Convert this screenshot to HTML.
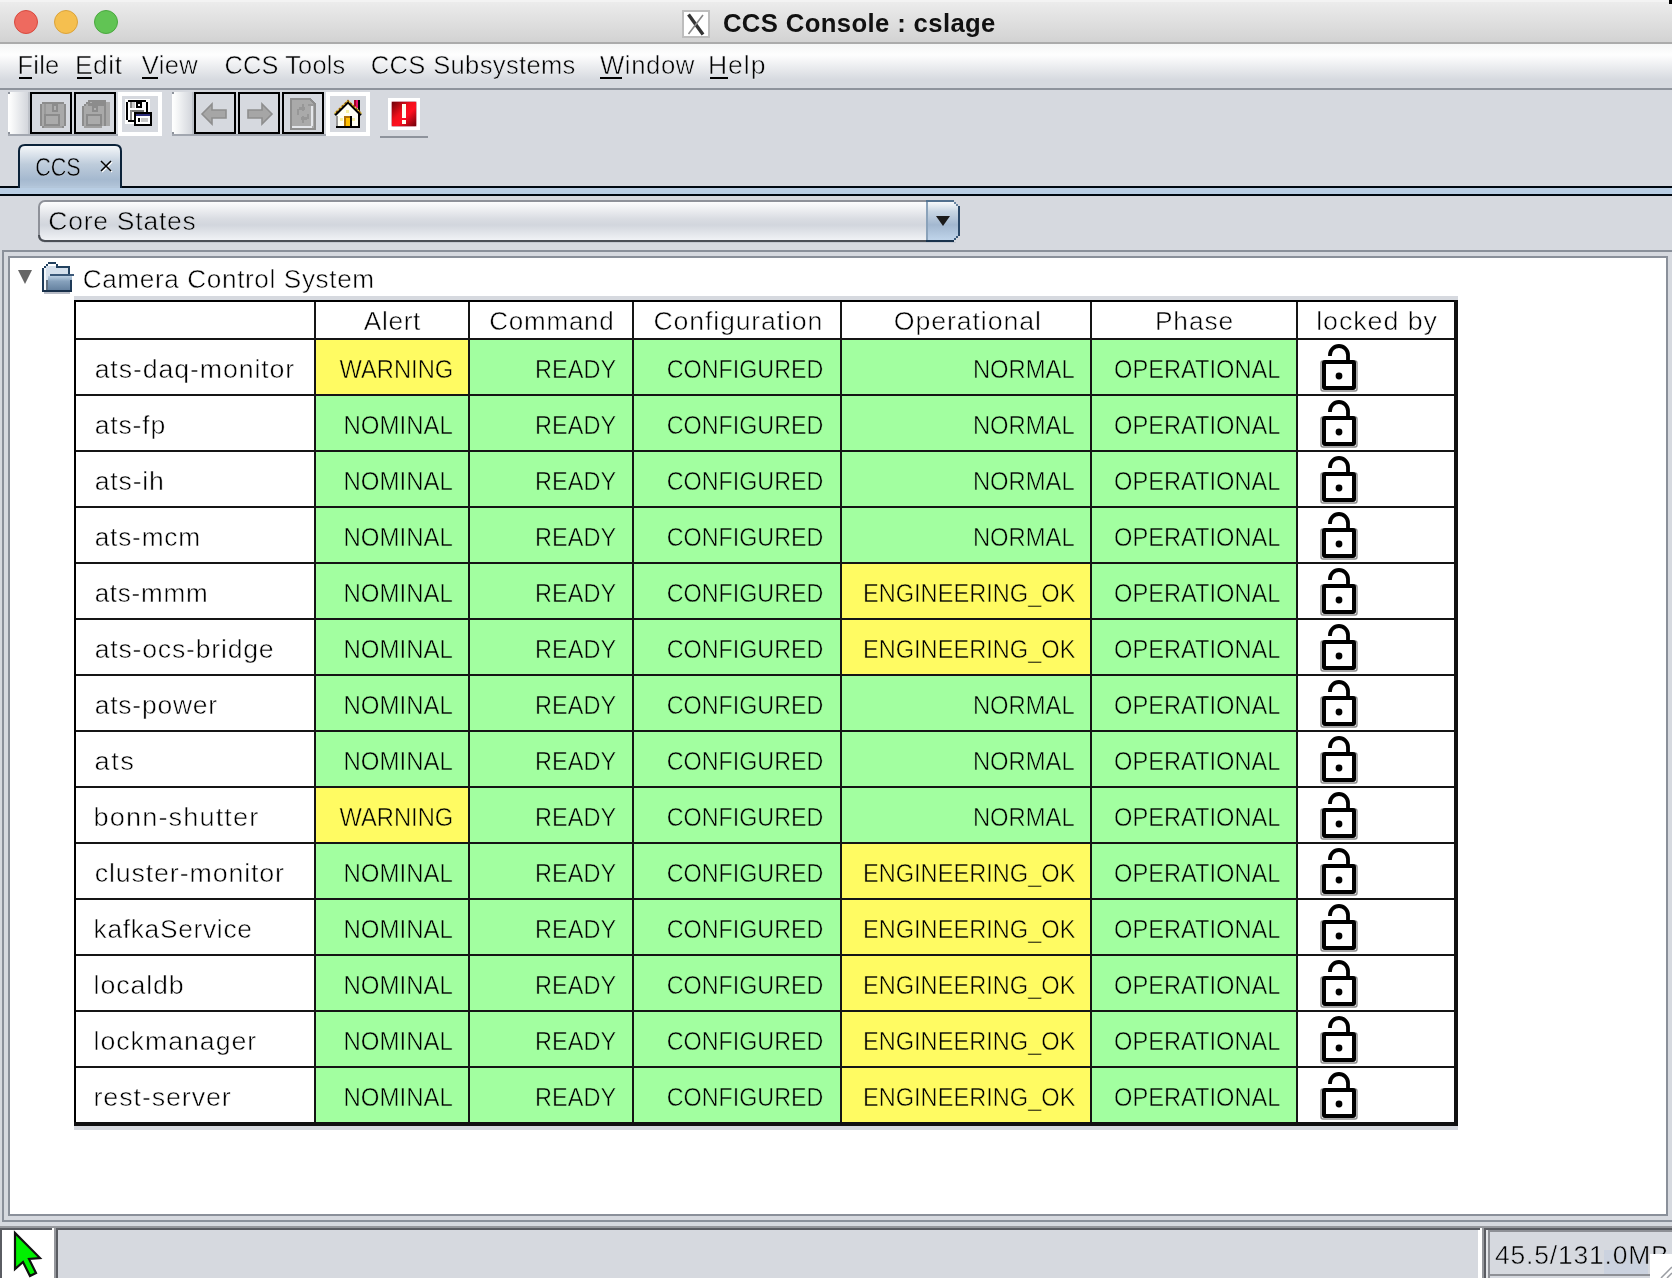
<!DOCTYPE html>
<html><head><meta charset="utf-8"><title>CCS Console</title>
<style>html,body{margin:0;padding:0;width:1672px;height:1278px;overflow:hidden;background:#D6D9DF}
svg{display:block;will-change:transform} text{font-family:"Liberation Sans",sans-serif;white-space:pre}</style></head>
<body><svg width="1672" height="1278" viewBox="0 0 1672 1278" shape-rendering="crispEdges">
<defs>
  <linearGradient id="gTitle" x1="0" y1="0" x2="0" y2="1"><stop offset="0" stop-color="#EDEDED"/><stop offset="1" stop-color="#D2D2D2"/></linearGradient>
  <linearGradient id="gMenu" x1="0" y1="0" x2="0" y2="1"><stop offset="0" stop-color="#F5F6F6"/><stop offset="0.25" stop-color="#FEFEFE"/><stop offset="0.82" stop-color="#D6D9DF"/><stop offset="1" stop-color="#D6D9DF"/></linearGradient>
  <linearGradient id="gGrip" x1="0" y1="0" x2="1" y2="0"><stop offset="0" stop-color="#FFFFFF"/><stop offset="0.15" stop-color="#FAFBFB"/><stop offset="1" stop-color="#D3D6DC"/></linearGradient>
  <linearGradient id="gTab" x1="0" y1="0" x2="0" y2="1"><stop offset="0" stop-color="#F7F9FB"/><stop offset="0.45" stop-color="#BECCDB"/><stop offset="0.8" stop-color="#A5B9CF"/><stop offset="1" stop-color="#B3C6DA"/></linearGradient>
  <linearGradient id="gCombo" x1="0" y1="0" x2="0" y2="1"><stop offset="0" stop-color="#FFFFFF"/><stop offset="0.45" stop-color="#D9DCE2"/><stop offset="0.6" stop-color="#D2D6DD"/><stop offset="1" stop-color="#F2F4F7"/></linearGradient>
  <linearGradient id="gArrow" x1="0" y1="0" x2="0" y2="1"><stop offset="0" stop-color="#F6F9FB"/><stop offset="0.25" stop-color="#C8D6E3"/><stop offset="0.6" stop-color="#A3B8D0"/><stop offset="1" stop-color="#BFD4EA"/></linearGradient>
  <linearGradient id="gFolder" x1="0" y1="0" x2="0" y2="1"><stop offset="0" stop-color="#BCD0E3"/><stop offset="0.35" stop-color="#86A1BC"/><stop offset="1" stop-color="#627F9D"/></linearGradient>
  <linearGradient id="gRed" x1="0" y1="0" x2="1" y2="1"><stop offset="0" stop-color="#6E0008"/><stop offset="0.4" stop-color="#F0101A"/><stop offset="0.6" stop-color="#FF1020"/><stop offset="1" stop-color="#70000A"/></linearGradient>
</defs>
<!-- title bar -->
<rect x="0" y="0" width="1672" height="43" fill="url(#gTitle)"/>
<rect x="0" y="42" width="1672" height="2" fill="#ABABAB"/>
<rect x="0" y="0" width="1672" height="2" fill="#F3F3F3"/>
<rect x="1669" y="0" width="3" height="4" fill="#000"/>
<g shape-rendering="auto">
<circle cx="26" cy="22" r="11.5" fill="#EE6A5F" stroke="#D8493E" stroke-width="1"/>
<circle cx="66" cy="22" r="11.5" fill="#F5BF4F" stroke="#DBA33A" stroke-width="1"/>
<circle cx="106" cy="22" r="11.5" fill="#61C454" stroke="#4AA83F" stroke-width="1"/>
</g>
<!-- X11 icon -->
<rect x="682" y="10" width="28" height="28" fill="#BDBDBD"/>
<rect x="684" y="12" width="24" height="24" fill="#FFFFFF"/>
<g shape-rendering="auto">
<path d="M688.5 14.5 L703 34.5" stroke="#333" stroke-width="3.4"/>
<path d="M703 15 L688.5 34" stroke="#888" stroke-width="1.6"/>
</g>
<!-- menu bar -->
<rect x="0" y="44" width="1672" height="44" fill="url(#gMenu)"/>
<rect x="0" y="88" width="1672" height="2" fill="#8E939C"/>
<g fill="#000">
<rect x="19" y="77" width="13" height="2"/>
<rect x="77" y="77" width="15" height="2"/>
<rect x="142" y="77" width="16" height="2"/>
<rect x="600" y="77" width="22" height="2"/>
<rect x="710" y="77" width="18" height="2"/>
</g>
<!-- toolbar 1 -->
<rect x="8" y="92" width="20" height="42" fill="url(#gGrip)"/>
<rect x="28" y="92" width="2" height="42" fill="#BEC2C9"/>
<rect x="8" y="92" width="2" height="2" fill="#8E939C"/>
<rect x="8" y="132" width="2" height="2" fill="#8E939C"/>
<rect x="8" y="134" width="112" height="2" fill="#A2A7B0"/>
<rect x="31" y="93" width="40" height="40" fill="none" stroke="#000" stroke-width="2"/>
<rect x="75" y="93" width="40" height="40" fill="none" stroke="#000" stroke-width="2"/>
<rect x="118" y="92" width="44" height="44" fill="#FFFFFF"/>
<rect x="122" y="96" width="36" height="36" fill="#D6D9DF"/>
<!-- floppy disabled 1 -->
<g>
<rect x="42" y="102" width="22" height="26" fill="#8C8C8C"/>
<rect x="40" y="104" width="26" height="22" fill="#8C8C8C"/>
<rect x="42" y="104" width="22" height="22" fill="#A9A9A9"/>
<rect x="44" y="104" width="2" height="10" fill="#999"/>
<rect x="52" y="104" width="6" height="8" fill="#8C8C8C"/>
<rect x="54" y="106" width="2" height="4" fill="#B0B0B0"/>
<rect x="44" y="114" width="16" height="12" fill="#8C8C8C"/>
<rect x="46" y="116" width="12" height="8" fill="#ABABAB"/>
<rect x="44" y="126" width="18" height="2" fill="#A0A0A0"/>
</g>
<!-- floppy disabled 2 -->
<g>
<rect x="88" y="100" width="18" height="2" fill="#8C8C8C"/>
<rect x="86" y="102" width="22" height="2" fill="#8C8C8C"/>
<rect x="106" y="102" width="4" height="24" fill="#A8A8A8"/>
<rect x="104" y="102" width="2" height="24" fill="#8C8C8C"/>
<rect x="84" y="104" width="22" height="22" fill="#8C8C8C"/>
<rect x="82" y="106" width="24" height="20" fill="#8C8C8C"/>
<rect x="84" y="106" width="20" height="20" fill="#A9A9A9"/>
<rect x="86" y="104" width="2" height="2" fill="#A9A9A9"/>
<rect x="90" y="102" width="2" height="1" fill="#B0B0B0"/>
<rect x="92" y="106" width="6" height="6" fill="#8C8C8C"/>
<rect x="94" y="108" width="2" height="2" fill="#B0B0B0"/>
<rect x="86" y="114" width="16" height="12" fill="#8C8C8C"/>
<rect x="88" y="116" width="12" height="8" fill="#ABABAB"/>
<rect x="84" y="126" width="18" height="2" fill="#A0A0A0"/>
</g>
<!-- floppy save-as -->
<g>
<rect x="125" y="99" width="25" height="25" fill="#FFFFFF"/>
<rect x="128" y="100" width="18" height="2" fill="#000"/>
<rect x="126" y="102" width="2" height="18" fill="#000"/>
<rect x="128" y="120" width="6" height="2" fill="#000"/>
<rect x="146" y="102" width="2" height="10" fill="#000"/>
<rect x="136" y="102" width="6" height="6" fill="#000"/>
<rect x="138" y="104" width="2" height="2" fill="#FFFFFF"/>
<rect x="130" y="102" width="2" height="6" fill="#888"/>
<rect x="132" y="102" width="3" height="6" fill="#CCC"/>
<rect x="130" y="110" width="14" height="2" fill="#777"/>
<rect x="130" y="110" width="2" height="10" fill="#888"/>
<rect x="134" y="112" width="18" height="14" fill="#000"/>
<rect x="136" y="114" width="14" height="10" fill="#FFFFFF"/>
<rect x="136" y="114" width="14" height="2" fill="#2E2E7A"/>
<rect x="138" y="118" width="2" height="4" fill="#000"/>
<rect x="141" y="118" width="7" height="4" fill="#C8C8C8"/>
</g>
<!-- toolbar 2 -->
<rect x="172" y="92" width="20" height="42" fill="url(#gGrip)"/>
<rect x="192" y="92" width="2" height="42" fill="#BEC2C9"/>
<rect x="172" y="92" width="2" height="2" fill="#8E939C"/>
<rect x="172" y="132" width="2" height="2" fill="#8E939C"/>
<rect x="172" y="134" width="155" height="2" fill="#A2A7B0"/>
<rect x="195" y="93" width="40" height="40" fill="none" stroke="#000" stroke-width="2"/>
<rect x="239" y="93" width="40" height="40" fill="none" stroke="#000" stroke-width="2"/>
<rect x="283" y="93" width="40" height="40" fill="none" stroke="#000" stroke-width="2"/>
<g shape-rendering="auto">
<path d="M202 114 L212 104 L212 110 L226 110 L226 118 L212 118 L212 124 Z" fill="#A6A6A6" stroke="#8E8E8E" stroke-width="1.6"/>
<path d="M272 114 L262 104 L262 110 L248 110 L248 118 L262 118 L262 124 Z" fill="#A6A6A6" stroke="#8E8E8E" stroke-width="1.6"/>
</g>
<g>
<path d="M290 98 L310 98 L316 104 L316 130 L290 130 Z" fill="#8E8E8E"/>
<path d="M292 100 L309 100 L314 105 L314 128 L292 128 Z" fill="#AAAAAA"/>
<rect x="292" y="126" width="20" height="2" fill="#E4E6EA"/>
<rect x="311" y="105" width="2" height="21" fill="#E4E6EA"/>
<rect x="308" y="104" width="6" height="2" fill="#999"/>
<rect x="297" y="109" width="2" height="6" fill="#979797"/>
<rect x="299" y="107" width="6" height="3" fill="#979797"/>
<rect x="302" y="104" width="2" height="7" fill="#979797"/>
<rect x="301" y="117" width="6" height="3" fill="#979797"/>
<rect x="307" y="114" width="2" height="5" fill="#979797"/>
<rect x="302" y="116" width="2" height="7" fill="#979797"/>
</g>
<rect x="326" y="92" width="44" height="44" fill="#FFFFFF"/>
<rect x="330" y="96" width="36" height="36" fill="#D6D9DF"/>
<g>
<path d="M337 127 L337 115 L348 104 L359 115 L359 127 Z" fill="#FFFFF4"/>
<rect x="340" y="118" width="3" height="3" fill="#F8F0A0"/>
<rect x="352" y="118" width="3" height="3" fill="#F8F0A0"/>
<rect x="346" y="110" width="3" height="3" fill="#F8F0A0"/>
<rect x="354" y="100" width="5" height="8" fill="#E8106A"/>
<rect x="354" y="100" width="2" height="6" fill="#A00020"/>
<rect x="358" y="100" width="2" height="12" fill="#000"/>
<rect x="336" y="116" width="2" height="10" fill="#999"/>
<rect x="358" y="114" width="2" height="12" fill="#000"/>
<rect x="336" y="126" width="24" height="2" fill="#000"/>
<rect x="344" y="116" width="8" height="10" fill="#B07000"/>
<rect x="346" y="118" width="4" height="8" fill="#FFC000"/>
<rect x="350" y="116" width="2" height="10" fill="#000"/>
</g>
<g shape-rendering="auto">
<path d="M335 115 L348 102 L361 115" stroke="#000" stroke-width="2.6" fill="none"/>
<path d="M334.5 113.5 L348 100.5 L361.5 113.5" stroke="#F0D040" stroke-width="1.3" fill="none" stroke-dasharray="2 2"/>
<path d="M334.5 113.5 L348 100.5 L361.5 113.5" stroke="#A06000" stroke-width="1.3" fill="none" stroke-dasharray="2 2" stroke-dashoffset="2"/>
</g>
<!-- error button -->
<rect x="388" y="98" width="32" height="32" fill="#FFFFFF"/>
<g shape-rendering="auto">
<rect x="391" y="101" width="26" height="26" rx="2" fill="#C06070" opacity="0.6"/>
<rect x="392" y="102" width="24" height="24" fill="url(#gRed)"/>
<rect x="402" y="104" width="4" height="14" fill="#FFFFF0"/>
<rect x="402" y="120" width="4" height="4" fill="#FFFFF0"/>
</g>
<rect x="380" y="136" width="48" height="2" fill="#8E939C"/>
<!-- tab -->
<rect x="0" y="186" width="1672" height="2" fill="#000810"/>
<rect x="0" y="188" width="1672" height="6" fill="#B9CEE4"/>
<rect x="0" y="194" width="1672" height="2" fill="#000810"/>
<g shape-rendering="auto">
<path d="M19 188 L19 151 Q19 145 25 145 L115 145 Q121 145 121 151 L121 188" fill="url(#gTab)" stroke="#0B2239" stroke-width="2"/>
</g>
<rect x="20" y="186" width="100" height="2" fill="#B3C6DA"/>
<g shape-rendering="auto">
<path d="M101 161 L111 171 M111 161 L101 171" stroke="#FFFFFF" stroke-width="1.5" transform="translate(1,1)"/>
<path d="M101 161 L111 171 M111 161 L101 171" stroke="#000" stroke-width="1.5"/>
</g>
<!-- combo -->
<g shape-rendering="auto">
<rect x="39" y="201" width="920" height="40" rx="6" fill="url(#gCombo)" stroke="#8E9199" stroke-width="2"/>
<path d="M39 235 Q39 241 45 241 L926 241" stroke="#4A4E55" stroke-width="2" fill="none"/>
</g>
<rect x="44" y="242" width="912" height="1" fill="#C4C8D0"/>
<g>
<rect x="926" y="200" width="34" height="42" fill="#D6D9DF"/>
<path d="M926 202 L954 202 L958 206 L958 236 L954 240 L926 240 Z" fill="url(#gArrow)"/>
<rect x="926" y="200" width="28" height="2" fill="#51708E"/>
<rect x="926" y="240" width="28" height="2" fill="#18324C"/>
<rect x="926" y="202" width="2" height="38" fill="#8AA2BA"/>
<rect x="958" y="206" width="2" height="30" fill="#2A4868"/>
<rect x="954" y="202" width="2" height="2" fill="#6A86A2"/>
<rect x="956" y="204" width="2" height="2" fill="#6A86A2"/>
<rect x="954" y="238" width="2" height="2" fill="#3A5878"/>
<rect x="956" y="236" width="2" height="2" fill="#3A5878"/>
</g>
<g shape-rendering="auto"><path d="M936 216 L950 216 L943 226 Z" fill="#1A1A1A"/></g>
<!-- panel borders -->
<rect x="3" y="251" width="1680" height="970" fill="none" stroke="#8A909A" stroke-width="2"/>
<rect x="9" y="257" width="1658" height="958" fill="#FFFFFF" stroke="#8A909A" stroke-width="2"/>
<!-- tree -->
<g shape-rendering="auto"><path d="M18 270 L32 270 L25 284 Z" fill="#656565"/></g>
<g>
<rect x="44" y="266" width="26" height="25" fill="#D5E0EC"/>
<rect x="44" y="268" width="2" height="23" fill="#F4F7FA"/>
<rect x="48" y="262" width="8" height="2" fill="#22415F"/>
<rect x="46" y="264" width="2" height="2" fill="#22415F"/>
<rect x="44" y="266" width="2" height="2" fill="#22415F"/>
<rect x="48" y="264" width="8" height="2" fill="#FFFFFF"/>
<rect x="56" y="264" width="2" height="2" fill="#22415F"/>
<rect x="56" y="266" width="14" height="2" fill="#22415F"/>
<rect x="42" y="268" width="2" height="23" fill="#1E3A58"/>
<rect x="68" y="268" width="2" height="8" fill="#22415F"/>
<rect x="50" y="274" width="24" height="2" fill="#3B5878"/>
<rect x="48" y="276" width="24" height="15" fill="url(#gFolder)"/>
<rect x="46" y="280" width="2" height="11" fill="#5F6F80"/>
<rect x="70" y="280" width="2" height="11" fill="#1E3A58"/>
<rect x="42" y="290" width="30" height="2" fill="#18304A"/>
<rect x="44" y="292" width="26" height="2" fill="#B8BCC6"/>
</g>
<!-- table -->
<rect x="74" y="296" width="1384" height="4" fill="#D6D9DF"/>
<rect x="74" y="1126" width="1384" height="4" fill="#D6D9DF"/>
<g id="cells">
<rect x="74" y="300" width="1384" height="826" fill="#FFFFFF"/>
<rect x="314" y="338" width="154" height="56" fill="#FFFB62"/>
<rect x="468" y="338" width="164" height="56" fill="#A2FFA0"/>
<rect x="632" y="338" width="208" height="56" fill="#A2FFA0"/>
<rect x="840" y="338" width="250" height="56" fill="#A2FFA0"/>
<rect x="1090" y="338" width="206" height="56" fill="#A2FFA0"/>
<rect x="314" y="394" width="154" height="56" fill="#A2FFA0"/>
<rect x="468" y="394" width="164" height="56" fill="#A2FFA0"/>
<rect x="632" y="394" width="208" height="56" fill="#A2FFA0"/>
<rect x="840" y="394" width="250" height="56" fill="#A2FFA0"/>
<rect x="1090" y="394" width="206" height="56" fill="#A2FFA0"/>
<rect x="314" y="450" width="154" height="56" fill="#A2FFA0"/>
<rect x="468" y="450" width="164" height="56" fill="#A2FFA0"/>
<rect x="632" y="450" width="208" height="56" fill="#A2FFA0"/>
<rect x="840" y="450" width="250" height="56" fill="#A2FFA0"/>
<rect x="1090" y="450" width="206" height="56" fill="#A2FFA0"/>
<rect x="314" y="506" width="154" height="56" fill="#A2FFA0"/>
<rect x="468" y="506" width="164" height="56" fill="#A2FFA0"/>
<rect x="632" y="506" width="208" height="56" fill="#A2FFA0"/>
<rect x="840" y="506" width="250" height="56" fill="#A2FFA0"/>
<rect x="1090" y="506" width="206" height="56" fill="#A2FFA0"/>
<rect x="314" y="562" width="154" height="56" fill="#A2FFA0"/>
<rect x="468" y="562" width="164" height="56" fill="#A2FFA0"/>
<rect x="632" y="562" width="208" height="56" fill="#A2FFA0"/>
<rect x="840" y="562" width="250" height="56" fill="#FFFB62"/>
<rect x="1090" y="562" width="206" height="56" fill="#A2FFA0"/>
<rect x="314" y="618" width="154" height="56" fill="#A2FFA0"/>
<rect x="468" y="618" width="164" height="56" fill="#A2FFA0"/>
<rect x="632" y="618" width="208" height="56" fill="#A2FFA0"/>
<rect x="840" y="618" width="250" height="56" fill="#FFFB62"/>
<rect x="1090" y="618" width="206" height="56" fill="#A2FFA0"/>
<rect x="314" y="674" width="154" height="56" fill="#A2FFA0"/>
<rect x="468" y="674" width="164" height="56" fill="#A2FFA0"/>
<rect x="632" y="674" width="208" height="56" fill="#A2FFA0"/>
<rect x="840" y="674" width="250" height="56" fill="#A2FFA0"/>
<rect x="1090" y="674" width="206" height="56" fill="#A2FFA0"/>
<rect x="314" y="730" width="154" height="56" fill="#A2FFA0"/>
<rect x="468" y="730" width="164" height="56" fill="#A2FFA0"/>
<rect x="632" y="730" width="208" height="56" fill="#A2FFA0"/>
<rect x="840" y="730" width="250" height="56" fill="#A2FFA0"/>
<rect x="1090" y="730" width="206" height="56" fill="#A2FFA0"/>
<rect x="314" y="786" width="154" height="56" fill="#FFFB62"/>
<rect x="468" y="786" width="164" height="56" fill="#A2FFA0"/>
<rect x="632" y="786" width="208" height="56" fill="#A2FFA0"/>
<rect x="840" y="786" width="250" height="56" fill="#A2FFA0"/>
<rect x="1090" y="786" width="206" height="56" fill="#A2FFA0"/>
<rect x="314" y="842" width="154" height="56" fill="#A2FFA0"/>
<rect x="468" y="842" width="164" height="56" fill="#A2FFA0"/>
<rect x="632" y="842" width="208" height="56" fill="#A2FFA0"/>
<rect x="840" y="842" width="250" height="56" fill="#FFFB62"/>
<rect x="1090" y="842" width="206" height="56" fill="#A2FFA0"/>
<rect x="314" y="898" width="154" height="56" fill="#A2FFA0"/>
<rect x="468" y="898" width="164" height="56" fill="#A2FFA0"/>
<rect x="632" y="898" width="208" height="56" fill="#A2FFA0"/>
<rect x="840" y="898" width="250" height="56" fill="#FFFB62"/>
<rect x="1090" y="898" width="206" height="56" fill="#A2FFA0"/>
<rect x="314" y="954" width="154" height="56" fill="#A2FFA0"/>
<rect x="468" y="954" width="164" height="56" fill="#A2FFA0"/>
<rect x="632" y="954" width="208" height="56" fill="#A2FFA0"/>
<rect x="840" y="954" width="250" height="56" fill="#FFFB62"/>
<rect x="1090" y="954" width="206" height="56" fill="#A2FFA0"/>
<rect x="314" y="1010" width="154" height="56" fill="#A2FFA0"/>
<rect x="468" y="1010" width="164" height="56" fill="#A2FFA0"/>
<rect x="632" y="1010" width="208" height="56" fill="#A2FFA0"/>
<rect x="840" y="1010" width="250" height="56" fill="#FFFB62"/>
<rect x="1090" y="1010" width="206" height="56" fill="#A2FFA0"/>
<rect x="314" y="1066" width="154" height="56" fill="#A2FFA0"/>
<rect x="468" y="1066" width="164" height="56" fill="#A2FFA0"/>
<rect x="632" y="1066" width="208" height="56" fill="#A2FFA0"/>
<rect x="840" y="1066" width="250" height="56" fill="#FFFB62"/>
<rect x="1090" y="1066" width="206" height="56" fill="#A2FFA0"/>
<rect x="314" y="300" width="2" height="824" fill="#151515"/>
<rect x="468" y="300" width="2" height="824" fill="#151515"/>
<rect x="632" y="300" width="2" height="824" fill="#151515"/>
<rect x="840" y="300" width="2" height="824" fill="#151515"/>
<rect x="1090" y="300" width="2" height="824" fill="#151515"/>
<rect x="1296" y="300" width="2" height="824" fill="#151515"/>
<rect x="74" y="338" width="1382" height="2" fill="#151515"/>
<rect x="74" y="394" width="1382" height="2" fill="#151515"/>
<rect x="74" y="450" width="1382" height="2" fill="#151515"/>
<rect x="74" y="506" width="1382" height="2" fill="#151515"/>
<rect x="74" y="562" width="1382" height="2" fill="#151515"/>
<rect x="74" y="618" width="1382" height="2" fill="#151515"/>
<rect x="74" y="674" width="1382" height="2" fill="#151515"/>
<rect x="74" y="730" width="1382" height="2" fill="#151515"/>
<rect x="74" y="786" width="1382" height="2" fill="#151515"/>
<rect x="74" y="842" width="1382" height="2" fill="#151515"/>
<rect x="74" y="898" width="1382" height="2" fill="#151515"/>
<rect x="74" y="954" width="1382" height="2" fill="#151515"/>
<rect x="74" y="1010" width="1382" height="2" fill="#151515"/>
<rect x="74" y="1066" width="1382" height="2" fill="#151515"/>
<rect x="74" y="300" width="1384" height="2" fill="#000"/>
<rect x="74" y="300" width="2" height="826" fill="#000"/>
<rect x="1454" y="300" width="4" height="826" fill="#111"/>
<rect x="74" y="1122" width="1384" height="4" fill="#111"/>
<g shape-rendering="auto" transform="translate(0,0)"><rect x="1321" y="361" width="36" height="30" rx="2" fill="none" stroke="#8A8A8A" stroke-width="1.4"/><rect x="1324" y="362" width="30" height="26" rx="1" fill="none" stroke="#000" stroke-width="4"/><path d="M1330 356 L1330 355 A9 9 0 0 1 1348 355 L1348 361" fill="none" stroke="#000" stroke-width="3.8"/><circle cx="1339" cy="376" r="3.4" fill="#000"/></g>
<g shape-rendering="auto" transform="translate(0,56)"><rect x="1321" y="361" width="36" height="30" rx="2" fill="none" stroke="#8A8A8A" stroke-width="1.4"/><rect x="1324" y="362" width="30" height="26" rx="1" fill="none" stroke="#000" stroke-width="4"/><path d="M1330 356 L1330 355 A9 9 0 0 1 1348 355 L1348 361" fill="none" stroke="#000" stroke-width="3.8"/><circle cx="1339" cy="376" r="3.4" fill="#000"/></g>
<g shape-rendering="auto" transform="translate(0,112)"><rect x="1321" y="361" width="36" height="30" rx="2" fill="none" stroke="#8A8A8A" stroke-width="1.4"/><rect x="1324" y="362" width="30" height="26" rx="1" fill="none" stroke="#000" stroke-width="4"/><path d="M1330 356 L1330 355 A9 9 0 0 1 1348 355 L1348 361" fill="none" stroke="#000" stroke-width="3.8"/><circle cx="1339" cy="376" r="3.4" fill="#000"/></g>
<g shape-rendering="auto" transform="translate(0,168)"><rect x="1321" y="361" width="36" height="30" rx="2" fill="none" stroke="#8A8A8A" stroke-width="1.4"/><rect x="1324" y="362" width="30" height="26" rx="1" fill="none" stroke="#000" stroke-width="4"/><path d="M1330 356 L1330 355 A9 9 0 0 1 1348 355 L1348 361" fill="none" stroke="#000" stroke-width="3.8"/><circle cx="1339" cy="376" r="3.4" fill="#000"/></g>
<g shape-rendering="auto" transform="translate(0,224)"><rect x="1321" y="361" width="36" height="30" rx="2" fill="none" stroke="#8A8A8A" stroke-width="1.4"/><rect x="1324" y="362" width="30" height="26" rx="1" fill="none" stroke="#000" stroke-width="4"/><path d="M1330 356 L1330 355 A9 9 0 0 1 1348 355 L1348 361" fill="none" stroke="#000" stroke-width="3.8"/><circle cx="1339" cy="376" r="3.4" fill="#000"/></g>
<g shape-rendering="auto" transform="translate(0,280)"><rect x="1321" y="361" width="36" height="30" rx="2" fill="none" stroke="#8A8A8A" stroke-width="1.4"/><rect x="1324" y="362" width="30" height="26" rx="1" fill="none" stroke="#000" stroke-width="4"/><path d="M1330 356 L1330 355 A9 9 0 0 1 1348 355 L1348 361" fill="none" stroke="#000" stroke-width="3.8"/><circle cx="1339" cy="376" r="3.4" fill="#000"/></g>
<g shape-rendering="auto" transform="translate(0,336)"><rect x="1321" y="361" width="36" height="30" rx="2" fill="none" stroke="#8A8A8A" stroke-width="1.4"/><rect x="1324" y="362" width="30" height="26" rx="1" fill="none" stroke="#000" stroke-width="4"/><path d="M1330 356 L1330 355 A9 9 0 0 1 1348 355 L1348 361" fill="none" stroke="#000" stroke-width="3.8"/><circle cx="1339" cy="376" r="3.4" fill="#000"/></g>
<g shape-rendering="auto" transform="translate(0,392)"><rect x="1321" y="361" width="36" height="30" rx="2" fill="none" stroke="#8A8A8A" stroke-width="1.4"/><rect x="1324" y="362" width="30" height="26" rx="1" fill="none" stroke="#000" stroke-width="4"/><path d="M1330 356 L1330 355 A9 9 0 0 1 1348 355 L1348 361" fill="none" stroke="#000" stroke-width="3.8"/><circle cx="1339" cy="376" r="3.4" fill="#000"/></g>
<g shape-rendering="auto" transform="translate(0,448)"><rect x="1321" y="361" width="36" height="30" rx="2" fill="none" stroke="#8A8A8A" stroke-width="1.4"/><rect x="1324" y="362" width="30" height="26" rx="1" fill="none" stroke="#000" stroke-width="4"/><path d="M1330 356 L1330 355 A9 9 0 0 1 1348 355 L1348 361" fill="none" stroke="#000" stroke-width="3.8"/><circle cx="1339" cy="376" r="3.4" fill="#000"/></g>
<g shape-rendering="auto" transform="translate(0,504)"><rect x="1321" y="361" width="36" height="30" rx="2" fill="none" stroke="#8A8A8A" stroke-width="1.4"/><rect x="1324" y="362" width="30" height="26" rx="1" fill="none" stroke="#000" stroke-width="4"/><path d="M1330 356 L1330 355 A9 9 0 0 1 1348 355 L1348 361" fill="none" stroke="#000" stroke-width="3.8"/><circle cx="1339" cy="376" r="3.4" fill="#000"/></g>
<g shape-rendering="auto" transform="translate(0,560)"><rect x="1321" y="361" width="36" height="30" rx="2" fill="none" stroke="#8A8A8A" stroke-width="1.4"/><rect x="1324" y="362" width="30" height="26" rx="1" fill="none" stroke="#000" stroke-width="4"/><path d="M1330 356 L1330 355 A9 9 0 0 1 1348 355 L1348 361" fill="none" stroke="#000" stroke-width="3.8"/><circle cx="1339" cy="376" r="3.4" fill="#000"/></g>
<g shape-rendering="auto" transform="translate(0,616)"><rect x="1321" y="361" width="36" height="30" rx="2" fill="none" stroke="#8A8A8A" stroke-width="1.4"/><rect x="1324" y="362" width="30" height="26" rx="1" fill="none" stroke="#000" stroke-width="4"/><path d="M1330 356 L1330 355 A9 9 0 0 1 1348 355 L1348 361" fill="none" stroke="#000" stroke-width="3.8"/><circle cx="1339" cy="376" r="3.4" fill="#000"/></g>
<g shape-rendering="auto" transform="translate(0,672)"><rect x="1321" y="361" width="36" height="30" rx="2" fill="none" stroke="#8A8A8A" stroke-width="1.4"/><rect x="1324" y="362" width="30" height="26" rx="1" fill="none" stroke="#000" stroke-width="4"/><path d="M1330 356 L1330 355 A9 9 0 0 1 1348 355 L1348 361" fill="none" stroke="#000" stroke-width="3.8"/><circle cx="1339" cy="376" r="3.4" fill="#000"/></g>
<g shape-rendering="auto" transform="translate(0,728)"><rect x="1321" y="361" width="36" height="30" rx="2" fill="none" stroke="#8A8A8A" stroke-width="1.4"/><rect x="1324" y="362" width="30" height="26" rx="1" fill="none" stroke="#000" stroke-width="4"/><path d="M1330 356 L1330 355 A9 9 0 0 1 1348 355 L1348 361" fill="none" stroke="#000" stroke-width="3.8"/><circle cx="1339" cy="376" r="3.4" fill="#000"/></g>
</g>
<!-- status bar -->
<rect x="0" y="1222" width="1672" height="56" fill="#D6D9DF"/>
<rect x="0" y="1226" width="1672" height="2" fill="#95979C"/>
<rect x="0" y="1228" width="1672" height="2" fill="#5A5C62"/>
<rect x="0" y="1228" width="2" height="50" fill="#5A5C62"/>
<rect x="2" y="1230" width="50" height="48" fill="#FFFFFF"/>
<rect x="52" y="1228" width="2" height="50" fill="#FFFFFF"/>
<rect x="54" y="1226" width="2" height="52" fill="#95979C"/>
<rect x="56" y="1228" width="2" height="50" fill="#5A5C62"/>
<rect x="1478" y="1230" width="2" height="48" fill="#FFFFFF"/>
<rect x="1480" y="1228" width="2" height="50" fill="#FFFFFF"/>
<rect x="1482" y="1226" width="2" height="52" fill="#95979C"/>
<rect x="1484" y="1228" width="2" height="50" fill="#5A5C62"/>
<rect x="1486" y="1230" width="2" height="48" fill="#E4E6EA"/>
<rect x="1488" y="1230" width="190" height="2" fill="#8E9096"/>
<rect x="1488" y="1230" width="2" height="48" fill="#8E9096"/>
<rect x="1490" y="1274" width="190" height="2" fill="#8E9096"/>
<rect x="1604" y="1250" width="44" height="24" fill="#CBD2DF"/>
<g shape-rendering="auto">
<path d="M15 1233 L15 1269 L23 1262 L30 1276 L36 1273 L29 1259 L40 1258 Z" fill="#00F000" stroke="#101010" stroke-width="2.2" stroke-linejoin="miter"/>
</g>

<g shape-rendering="auto">
<text transform="translate(722.97,32) scale(1.0272,1)" font-size="25" font-weight="bold" fill="#111111" textLength="265.22" lengthAdjust="spacing">CCS Console : cslage</text>
<text transform="translate(17.46,74) scale(1.0203,1)" font-size="25" fill="#000" stroke="#EEF0F3" stroke-width="0.5" textLength="41.03" lengthAdjust="spacing">File</text>
<text transform="translate(74.90,74) scale(1.0488,1)" font-size="25" fill="#000" stroke="#EEF0F3" stroke-width="0.5" textLength="45.00" lengthAdjust="spacing">Edit</text>
<text transform="translate(141.80,74) scale(1.0204,1)" font-size="25" fill="#000" stroke="#EEF0F3" stroke-width="0.5" textLength="54.83" lengthAdjust="spacing">View</text>
<text transform="translate(224.49,74) scale(1.0129,1)" font-size="25" fill="#000" stroke="#EEF0F3" stroke-width="0.5" textLength="119.12" lengthAdjust="spacing">CCS Tools</text>
<text transform="translate(370.78,74) scale(1.0224,1)" font-size="25" fill="#000" stroke="#EEF0F3" stroke-width="0.5" textLength="200.15" lengthAdjust="spacing">CCS Subsystems</text>
<text transform="translate(600.00,74) scale(1.0309,1)" font-size="25" fill="#000" stroke="#EEF0F3" stroke-width="0.5" textLength="91.59" lengthAdjust="spacing">Window</text>
<text transform="translate(707.88,74) scale(1.0612,1)" font-size="25" fill="#000" stroke="#EEF0F3" stroke-width="0.5" textLength="54.25" lengthAdjust="spacing">Help</text>
<text transform="translate(35.14,176) scale(0.8627,1)" font-size="25" fill="#000" stroke="#C4D1DF" stroke-width="0.5" textLength="52.80" lengthAdjust="spacing">CCS</text>
<text transform="translate(48.24,230) scale(1.0592,1)" font-size="25" fill="#000" stroke="#DDE0E5" stroke-width="0.5" textLength="139.29" lengthAdjust="spacing">Core States</text>
<text transform="translate(82.65,288) scale(1.0466,1)" font-size="25" fill="#000" stroke="#FFFFFF" stroke-width="0.5" textLength="278.50" lengthAdjust="spacing">Camera Control System</text>
<text transform="translate(363.80,330) scale(1.0510,1)" font-size="25" fill="#000" stroke="#FFFFFF" stroke-width="0.5" textLength="53.88" lengthAdjust="spacing">Alert</text>
<text transform="translate(489.36,330) scale(1.0398,1)" font-size="25" fill="#000" stroke="#FFFFFF" stroke-width="0.5" textLength="119.66" lengthAdjust="spacing">Command</text>
<text transform="translate(653.43,330) scale(1.0685,1)" font-size="25" fill="#000" stroke="#FFFFFF" stroke-width="0.5" textLength="158.08" lengthAdjust="spacing">Configuration</text>
<text transform="translate(893.83,330) scale(1.0693,1)" font-size="25" fill="#000" stroke="#FFFFFF" stroke-width="0.5" textLength="137.48" lengthAdjust="spacing">Operational</text>
<text transform="translate(1154.89,330) scale(1.0537,1)" font-size="25" fill="#000" stroke="#FFFFFF" stroke-width="0.5" textLength="74.35" lengthAdjust="spacing">Phase</text>
<text transform="translate(1316.15,330) scale(1.0728,1)" font-size="25" fill="#000" stroke="#FFFFFF" stroke-width="0.5" textLength="112.62" lengthAdjust="spacing">locked by</text>
<text transform="translate(94.63,378) scale(1.0701,1)" font-size="25" fill="#000" stroke="#FFFFFF" stroke-width="0.5" textLength="186.48" lengthAdjust="spacing">ats-daq-monitor</text>
<text transform="translate(339.50,378) scale(0.9492,1)" font-size="25" fill="#000" stroke="#FFFB62" stroke-width="0.5" textLength="119.91" lengthAdjust="spacing">WARNING</text>
<text transform="translate(535.12,378) scale(0.9405,1)" font-size="25" fill="#000" stroke="#A2FFA0" stroke-width="0.5" textLength="86.14" lengthAdjust="spacing">READY</text>
<text transform="translate(666.77,378) scale(0.9319,1)" font-size="25" fill="#000" stroke="#A2FFA0" stroke-width="0.5" textLength="168.06" lengthAdjust="spacing">CONFIGURED</text>
<text transform="translate(972.90,378) scale(0.9519,1)" font-size="25" fill="#000" stroke="#A2FFA0" stroke-width="0.5" textLength="106.97" lengthAdjust="spacing">NORMAL</text>
<text transform="translate(1114.05,378) scale(0.9460,1)" font-size="25" fill="#000" stroke="#A2FFA0" stroke-width="0.5" textLength="175.97" lengthAdjust="spacing">OPERATIONAL</text>
<text transform="translate(94.63,434) scale(1.0656,1)" font-size="25" fill="#000" stroke="#FFFFFF" stroke-width="0.5" textLength="66.29" lengthAdjust="spacing">ats-fp</text>
<text transform="translate(343.48,434) scale(0.9604,1)" font-size="25" fill="#000" stroke="#A2FFA0" stroke-width="0.5" textLength="113.91" lengthAdjust="spacing">NOMINAL</text>
<text transform="translate(535.12,434) scale(0.9405,1)" font-size="25" fill="#000" stroke="#A2FFA0" stroke-width="0.5" textLength="86.14" lengthAdjust="spacing">READY</text>
<text transform="translate(666.77,434) scale(0.9319,1)" font-size="25" fill="#000" stroke="#A2FFA0" stroke-width="0.5" textLength="168.06" lengthAdjust="spacing">CONFIGURED</text>
<text transform="translate(972.90,434) scale(0.9519,1)" font-size="25" fill="#000" stroke="#A2FFA0" stroke-width="0.5" textLength="106.97" lengthAdjust="spacing">NORMAL</text>
<text transform="translate(1114.05,434) scale(0.9460,1)" font-size="25" fill="#000" stroke="#A2FFA0" stroke-width="0.5" textLength="175.97" lengthAdjust="spacing">OPERATIONAL</text>
<text transform="translate(94.63,490) scale(1.0678,1)" font-size="25" fill="#000" stroke="#FFFFFF" stroke-width="0.5" textLength="64.89" lengthAdjust="spacing">ats-ih</text>
<text transform="translate(343.48,490) scale(0.9604,1)" font-size="25" fill="#000" stroke="#A2FFA0" stroke-width="0.5" textLength="113.91" lengthAdjust="spacing">NOMINAL</text>
<text transform="translate(535.12,490) scale(0.9405,1)" font-size="25" fill="#000" stroke="#A2FFA0" stroke-width="0.5" textLength="86.14" lengthAdjust="spacing">READY</text>
<text transform="translate(666.77,490) scale(0.9319,1)" font-size="25" fill="#000" stroke="#A2FFA0" stroke-width="0.5" textLength="168.06" lengthAdjust="spacing">CONFIGURED</text>
<text transform="translate(972.90,490) scale(0.9519,1)" font-size="25" fill="#000" stroke="#A2FFA0" stroke-width="0.5" textLength="106.97" lengthAdjust="spacing">NORMAL</text>
<text transform="translate(1114.05,490) scale(0.9460,1)" font-size="25" fill="#000" stroke="#A2FFA0" stroke-width="0.5" textLength="175.97" lengthAdjust="spacing">OPERATIONAL</text>
<text transform="translate(94.65,546) scale(1.0516,1)" font-size="25" fill="#000" stroke="#FFFFFF" stroke-width="0.5" textLength="100.39" lengthAdjust="spacing">ats-mcm</text>
<text transform="translate(343.48,546) scale(0.9604,1)" font-size="25" fill="#000" stroke="#A2FFA0" stroke-width="0.5" textLength="113.91" lengthAdjust="spacing">NOMINAL</text>
<text transform="translate(535.12,546) scale(0.9405,1)" font-size="25" fill="#000" stroke="#A2FFA0" stroke-width="0.5" textLength="86.14" lengthAdjust="spacing">READY</text>
<text transform="translate(666.77,546) scale(0.9319,1)" font-size="25" fill="#000" stroke="#A2FFA0" stroke-width="0.5" textLength="168.06" lengthAdjust="spacing">CONFIGURED</text>
<text transform="translate(972.90,546) scale(0.9519,1)" font-size="25" fill="#000" stroke="#A2FFA0" stroke-width="0.5" textLength="106.97" lengthAdjust="spacing">NORMAL</text>
<text transform="translate(1114.05,546) scale(0.9460,1)" font-size="25" fill="#000" stroke="#A2FFA0" stroke-width="0.5" textLength="175.97" lengthAdjust="spacing">OPERATIONAL</text>
<text transform="translate(94.66,602) scale(1.0426,1)" font-size="25" fill="#000" stroke="#FFFFFF" stroke-width="0.5" textLength="108.33" lengthAdjust="spacing">ats-mmm</text>
<text transform="translate(343.48,602) scale(0.9604,1)" font-size="25" fill="#000" stroke="#A2FFA0" stroke-width="0.5" textLength="113.91" lengthAdjust="spacing">NOMINAL</text>
<text transform="translate(535.12,602) scale(0.9405,1)" font-size="25" fill="#000" stroke="#A2FFA0" stroke-width="0.5" textLength="86.14" lengthAdjust="spacing">READY</text>
<text transform="translate(666.77,602) scale(0.9319,1)" font-size="25" fill="#000" stroke="#A2FFA0" stroke-width="0.5" textLength="168.06" lengthAdjust="spacing">CONFIGURED</text>
<text transform="translate(862.91,602) scale(0.9441,1)" font-size="25" fill="#000" stroke="#FFFB62" stroke-width="0.5" textLength="225.06" lengthAdjust="spacing">ENGINEERING_OK</text>
<text transform="translate(1114.05,602) scale(0.9460,1)" font-size="25" fill="#000" stroke="#A2FFA0" stroke-width="0.5" textLength="175.97" lengthAdjust="spacing">OPERATIONAL</text>
<text transform="translate(94.63,658) scale(1.0657,1)" font-size="25" fill="#000" stroke="#FFFFFF" stroke-width="0.5" textLength="168.02" lengthAdjust="spacing">ats-ocs-bridge</text>
<text transform="translate(343.48,658) scale(0.9604,1)" font-size="25" fill="#000" stroke="#A2FFA0" stroke-width="0.5" textLength="113.91" lengthAdjust="spacing">NOMINAL</text>
<text transform="translate(535.12,658) scale(0.9405,1)" font-size="25" fill="#000" stroke="#A2FFA0" stroke-width="0.5" textLength="86.14" lengthAdjust="spacing">READY</text>
<text transform="translate(666.77,658) scale(0.9319,1)" font-size="25" fill="#000" stroke="#A2FFA0" stroke-width="0.5" textLength="168.06" lengthAdjust="spacing">CONFIGURED</text>
<text transform="translate(862.91,658) scale(0.9441,1)" font-size="25" fill="#000" stroke="#FFFB62" stroke-width="0.5" textLength="225.06" lengthAdjust="spacing">ENGINEERING_OK</text>
<text transform="translate(1114.05,658) scale(0.9460,1)" font-size="25" fill="#000" stroke="#A2FFA0" stroke-width="0.5" textLength="175.97" lengthAdjust="spacing">OPERATIONAL</text>
<text transform="translate(94.64,714) scale(1.0583,1)" font-size="25" fill="#000" stroke="#FFFFFF" stroke-width="0.5" textLength="115.77" lengthAdjust="spacing">ats-power</text>
<text transform="translate(343.48,714) scale(0.9604,1)" font-size="25" fill="#000" stroke="#A2FFA0" stroke-width="0.5" textLength="113.91" lengthAdjust="spacing">NOMINAL</text>
<text transform="translate(535.12,714) scale(0.9405,1)" font-size="25" fill="#000" stroke="#A2FFA0" stroke-width="0.5" textLength="86.14" lengthAdjust="spacing">READY</text>
<text transform="translate(666.77,714) scale(0.9319,1)" font-size="25" fill="#000" stroke="#A2FFA0" stroke-width="0.5" textLength="168.06" lengthAdjust="spacing">CONFIGURED</text>
<text transform="translate(972.90,714) scale(0.9519,1)" font-size="25" fill="#000" stroke="#A2FFA0" stroke-width="0.5" textLength="106.97" lengthAdjust="spacing">NORMAL</text>
<text transform="translate(1114.05,714) scale(0.9460,1)" font-size="25" fill="#000" stroke="#A2FFA0" stroke-width="0.5" textLength="175.97" lengthAdjust="spacing">OPERATIONAL</text>
<text transform="translate(94.61,770) scale(1.0935,1)" font-size="25" fill="#000" stroke="#FFFFFF" stroke-width="0.5" textLength="36.01" lengthAdjust="spacing">ats</text>
<text transform="translate(343.48,770) scale(0.9604,1)" font-size="25" fill="#000" stroke="#A2FFA0" stroke-width="0.5" textLength="113.91" lengthAdjust="spacing">NOMINAL</text>
<text transform="translate(535.12,770) scale(0.9405,1)" font-size="25" fill="#000" stroke="#A2FFA0" stroke-width="0.5" textLength="86.14" lengthAdjust="spacing">READY</text>
<text transform="translate(666.77,770) scale(0.9319,1)" font-size="25" fill="#000" stroke="#A2FFA0" stroke-width="0.5" textLength="168.06" lengthAdjust="spacing">CONFIGURED</text>
<text transform="translate(972.90,770) scale(0.9519,1)" font-size="25" fill="#000" stroke="#A2FFA0" stroke-width="0.5" textLength="106.97" lengthAdjust="spacing">NORMAL</text>
<text transform="translate(1114.05,770) scale(0.9460,1)" font-size="25" fill="#000" stroke="#A2FFA0" stroke-width="0.5" textLength="175.97" lengthAdjust="spacing">OPERATIONAL</text>
<text transform="translate(93.52,826) scale(1.0877,1)" font-size="25" fill="#000" stroke="#FFFFFF" stroke-width="0.5" textLength="151.50" lengthAdjust="spacing">bonn-shutter</text>
<text transform="translate(339.50,826) scale(0.9492,1)" font-size="25" fill="#000" stroke="#FFFB62" stroke-width="0.5" textLength="119.91" lengthAdjust="spacing">WARNING</text>
<text transform="translate(535.12,826) scale(0.9405,1)" font-size="25" fill="#000" stroke="#A2FFA0" stroke-width="0.5" textLength="86.14" lengthAdjust="spacing">READY</text>
<text transform="translate(666.77,826) scale(0.9319,1)" font-size="25" fill="#000" stroke="#A2FFA0" stroke-width="0.5" textLength="168.06" lengthAdjust="spacing">CONFIGURED</text>
<text transform="translate(972.90,826) scale(0.9519,1)" font-size="25" fill="#000" stroke="#A2FFA0" stroke-width="0.5" textLength="106.97" lengthAdjust="spacing">NORMAL</text>
<text transform="translate(1114.05,826) scale(0.9460,1)" font-size="25" fill="#000" stroke="#A2FFA0" stroke-width="0.5" textLength="175.97" lengthAdjust="spacing">OPERATIONAL</text>
<text transform="translate(94.63,882) scale(1.0732,1)" font-size="25" fill="#000" stroke="#FFFFFF" stroke-width="0.5" textLength="176.51" lengthAdjust="spacing">cluster-monitor</text>
<text transform="translate(343.48,882) scale(0.9604,1)" font-size="25" fill="#000" stroke="#A2FFA0" stroke-width="0.5" textLength="113.91" lengthAdjust="spacing">NOMINAL</text>
<text transform="translate(535.12,882) scale(0.9405,1)" font-size="25" fill="#000" stroke="#A2FFA0" stroke-width="0.5" textLength="86.14" lengthAdjust="spacing">READY</text>
<text transform="translate(666.77,882) scale(0.9319,1)" font-size="25" fill="#000" stroke="#A2FFA0" stroke-width="0.5" textLength="168.06" lengthAdjust="spacing">CONFIGURED</text>
<text transform="translate(862.91,882) scale(0.9441,1)" font-size="25" fill="#000" stroke="#FFFB62" stroke-width="0.5" textLength="225.06" lengthAdjust="spacing">ENGINEERING_OK</text>
<text transform="translate(1114.05,882) scale(0.9460,1)" font-size="25" fill="#000" stroke="#A2FFA0" stroke-width="0.5" textLength="175.97" lengthAdjust="spacing">OPERATIONAL</text>
<text transform="translate(93.59,938) scale(1.0536,1)" font-size="25" fill="#000" stroke="#FFFFFF" stroke-width="0.5" textLength="150.24" lengthAdjust="spacing">kafkaService</text>
<text transform="translate(343.48,938) scale(0.9604,1)" font-size="25" fill="#000" stroke="#A2FFA0" stroke-width="0.5" textLength="113.91" lengthAdjust="spacing">NOMINAL</text>
<text transform="translate(535.12,938) scale(0.9405,1)" font-size="25" fill="#000" stroke="#A2FFA0" stroke-width="0.5" textLength="86.14" lengthAdjust="spacing">READY</text>
<text transform="translate(666.77,938) scale(0.9319,1)" font-size="25" fill="#000" stroke="#A2FFA0" stroke-width="0.5" textLength="168.06" lengthAdjust="spacing">CONFIGURED</text>
<text transform="translate(862.91,938) scale(0.9441,1)" font-size="25" fill="#000" stroke="#FFFB62" stroke-width="0.5" textLength="225.06" lengthAdjust="spacing">ENGINEERING_OK</text>
<text transform="translate(1114.05,938) scale(0.9460,1)" font-size="25" fill="#000" stroke="#A2FFA0" stroke-width="0.5" textLength="175.97" lengthAdjust="spacing">OPERATIONAL</text>
<text transform="translate(93.56,994) scale(1.0704,1)" font-size="25" fill="#000" stroke="#FFFFFF" stroke-width="0.5" textLength="84.23" lengthAdjust="spacing">localdb</text>
<text transform="translate(343.48,994) scale(0.9604,1)" font-size="25" fill="#000" stroke="#A2FFA0" stroke-width="0.5" textLength="113.91" lengthAdjust="spacing">NOMINAL</text>
<text transform="translate(535.12,994) scale(0.9405,1)" font-size="25" fill="#000" stroke="#A2FFA0" stroke-width="0.5" textLength="86.14" lengthAdjust="spacing">READY</text>
<text transform="translate(666.77,994) scale(0.9319,1)" font-size="25" fill="#000" stroke="#A2FFA0" stroke-width="0.5" textLength="168.06" lengthAdjust="spacing">CONFIGURED</text>
<text transform="translate(862.91,994) scale(0.9441,1)" font-size="25" fill="#000" stroke="#FFFB62" stroke-width="0.5" textLength="225.06" lengthAdjust="spacing">ENGINEERING_OK</text>
<text transform="translate(1114.05,994) scale(0.9460,1)" font-size="25" fill="#000" stroke="#A2FFA0" stroke-width="0.5" textLength="175.97" lengthAdjust="spacing">OPERATIONAL</text>
<text transform="translate(93.56,1050) scale(1.0688,1)" font-size="25" fill="#000" stroke="#FFFFFF" stroke-width="0.5" textLength="152.22" lengthAdjust="spacing">lockmanager</text>
<text transform="translate(343.48,1050) scale(0.9604,1)" font-size="25" fill="#000" stroke="#A2FFA0" stroke-width="0.5" textLength="113.91" lengthAdjust="spacing">NOMINAL</text>
<text transform="translate(535.12,1050) scale(0.9405,1)" font-size="25" fill="#000" stroke="#A2FFA0" stroke-width="0.5" textLength="86.14" lengthAdjust="spacing">READY</text>
<text transform="translate(666.77,1050) scale(0.9319,1)" font-size="25" fill="#000" stroke="#A2FFA0" stroke-width="0.5" textLength="168.06" lengthAdjust="spacing">CONFIGURED</text>
<text transform="translate(862.91,1050) scale(0.9441,1)" font-size="25" fill="#000" stroke="#FFFB62" stroke-width="0.5" textLength="225.06" lengthAdjust="spacing">ENGINEERING_OK</text>
<text transform="translate(1114.05,1050) scale(0.9460,1)" font-size="25" fill="#000" stroke="#A2FFA0" stroke-width="0.5" textLength="175.97" lengthAdjust="spacing">OPERATIONAL</text>
<text transform="translate(93.55,1106) scale(1.0752,1)" font-size="25" fill="#000" stroke="#FFFFFF" stroke-width="0.5" textLength="127.65" lengthAdjust="spacing">rest-server</text>
<text transform="translate(343.48,1106) scale(0.9604,1)" font-size="25" fill="#000" stroke="#A2FFA0" stroke-width="0.5" textLength="113.91" lengthAdjust="spacing">NOMINAL</text>
<text transform="translate(535.12,1106) scale(0.9405,1)" font-size="25" fill="#000" stroke="#A2FFA0" stroke-width="0.5" textLength="86.14" lengthAdjust="spacing">READY</text>
<text transform="translate(666.77,1106) scale(0.9319,1)" font-size="25" fill="#000" stroke="#A2FFA0" stroke-width="0.5" textLength="168.06" lengthAdjust="spacing">CONFIGURED</text>
<text transform="translate(862.91,1106) scale(0.9441,1)" font-size="25" fill="#000" stroke="#FFFB62" stroke-width="0.5" textLength="225.06" lengthAdjust="spacing">ENGINEERING_OK</text>
<text transform="translate(1114.05,1106) scale(0.9460,1)" font-size="25" fill="#000" stroke="#A2FFA0" stroke-width="0.5" textLength="175.97" lengthAdjust="spacing">OPERATIONAL</text>
<text transform="translate(1494.94,1264) scale(1.0588,1)" font-size="25" fill="#000" stroke="#D6D9DF" stroke-width="0.5" textLength="164.17" lengthAdjust="spacing">45.5/131.0MB</text>
</g>
<rect x="1650" y="1254" width="22" height="24" fill="#FFFFFF"/>
<g shape-rendering="auto" stroke="#9A9DA3" stroke-width="1.5">
<path d="M1661 1278 L1672 1267 M1667 1278 L1672 1273"/>
</g>
</svg></body></html>
